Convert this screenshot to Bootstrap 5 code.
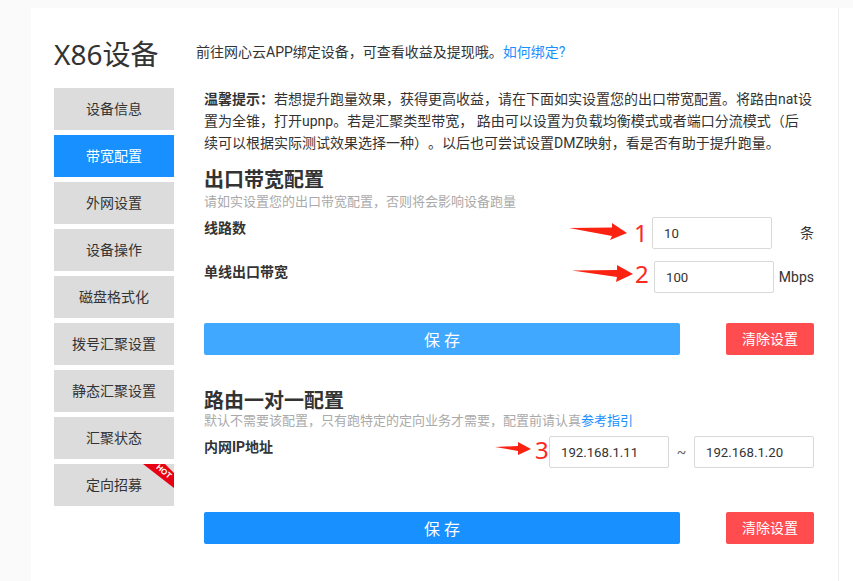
<!DOCTYPE html>
<html lang="zh-CN">
<head>
<meta charset="utf-8">
<title>X86设备</title>
<link href="https://cdn.jsdelivr.net/npm/bootstrap@5.3.0/dist/css/bootstrap.min.css" rel="stylesheet">
<style>
html,body{height:100%;}
body{background:#fafafa;font-family:Roboto,"Noto Sans CJK SC",sans-serif;font-size:14px;color:#333;overflow:hidden;text-spacing-trim:space-all;}
.shell{margin:8px 14px 0 31px;width:808px;height:573px;background:#fff;border-right:1px solid #eee;padding:28px 24px 0 23px;box-shadow:15px 0 0 #fff;}
.ttl{font-family:"Noto Sans","Noto Sans CJK SC",sans-serif;font-size:28px;line-height:36px;color:#333;width:142px;margin:0;font-weight:400;}
.lead-text{line-height:20px;padding-top:6px;color:#333;}
.lnk{color:#1890ff;text-decoration:none;}
.top-row{height:52px;}
.side{width:120px;gap:5px;}
.side-item{height:42px;background:#dcdcdc;color:#333;display:flex;align-items:center;justify-content:center;text-decoration:none;position:relative;overflow:hidden;line-height:1;}
.side-item.on{background:#1890ff;color:#fff;}
.ribbon{position:absolute;top:0;right:0;width:31px;height:24px;background:#e60012;clip-path:polygon(0 0,22px 0,31px 9px,31px 24px);}
.ribbon-t{position:absolute;top:3px;right:2px;font-size:8px;line-height:10px;font-weight:700;color:#fff;transform:rotate(40deg);font-family:"Liberation Sans",sans-serif;}
.body-col{width:610px;margin-left:30px;}
.tip{line-height:22px;margin:0;height:66px;white-space:nowrap;}
.sec-h{font-size:20px;font-weight:700;line-height:24px;margin:0;color:#333;}
.sec-s{font-size:13px;line-height:16px;color:#aaa;}
.sec-s.gap{margin-top:2px;}
.lbl{font-size:14px;font-weight:700;color:#333;line-height:20px;padding-top:1px;}
.inp{width:120px;height:32px;border:1px solid #d9d9d9;border-radius:2px;padding:0 11px;font-size:13.2px;line-height:30px;color:#333;background:#fff;flex-shrink:0;}
.inp:focus{outline:none;}
.rw{height:32px;}
.num{color:#fb2a1e;font-size:24px;line-height:32px;font-family:"Noto Sans",sans-serif;flex-shrink:0;}
.unit{line-height:32px;color:#333;text-align:right;flex-shrink:0;}
.act{height:32px;}
.save{width:476px;height:32px;padding:3px 0 0;border:0;border-radius:2px;background:#1890ff;color:#fff;font-size:16px;line-height:29px;}
.save.soft{background:#40a9ff;}
.clr{width:88px;height:32px;padding:0;border:0;border-radius:2px;background:#ff4d4f;color:#fff;font-size:14px;line-height:32px;}
.save:hover,.clr:hover{color:#fff;}
.s1{margin-top:14px;}
.r1{margin-top:7px;}
.r2{margin-top:12px;}
.a1{margin-top:30px;}
.s2{margin-top:34px;}
.r3{margin-top:7px;}
.a2{margin-top:44px;}
.u1{width:42px;}
.u2{width:40px;}
svg{flex-shrink:0;}
.ar1{width:58px;margin-right:7px;}
.ar2{width:61px;margin-right:2px;}
.ar3{width:36px;margin-right:4px;}
.n1{width:18px;}
.n2{width:19px;margin-top:-3px;}
.n3{width:14px;margin-top:-2px;}
.tilde{width:25px;text-align:center;color:#666;line-height:32px;}
</style>
</head>
<body>
<div class="shell">
  <div class="d-flex top-row">
    <h1 class="ttl">X86设备</h1>
    <div class="lead-text">前往网心云APP绑定设备&#xFF0C;可查看收益及提现哦。<a class="lnk" href="#">如何绑定?</a></div>
  </div>
  <div class="d-flex">
    <nav class="side d-flex flex-column flex-shrink-0">
      <a class="side-item" href="#">设备信息</a>
      <a class="side-item on" href="#">带宽配置</a>
      <a class="side-item" href="#">外网设置</a>
      <a class="side-item" href="#">设备操作</a>
      <a class="side-item" href="#">磁盘格式化</a>
      <a class="side-item" href="#">拨号汇聚设置</a>
      <a class="side-item" href="#">静态汇聚设置</a>
      <a class="side-item" href="#">汇聚状态</a>
      <a class="side-item" href="#">定向招募<span class="ribbon"></span><span class="ribbon-t">HOT</span></a>
    </nav>
    <main class="body-col">
      <p class="tip"><b>温馨提示&#xFF1A;</b>若想提升跑量效果&#xFF0C;获得更高收益&#xFF0C;请在下面如实设置您的出口带宽配置。将路由nat设<br>置为全锥&#xFF0C;打开upnp。若是汇聚类型带宽&#xFF0C; 路由可以设置为负载均衡模式或者端口分流模式&#xFF08;后<br>续可以根据实际测试效果选择一种&#xFF09;。以后也可尝试设置DMZ映射&#xFF0C;看是否有助于提升跑量。</p>

      <h2 class="sec-h s1">出口带宽配置</h2>
      <div class="sec-s gap">请如实设置您的出口带宽配置&#xFF0C;否则将会影响设备跑量</div>

      <div class="d-flex rw r1">
        <div class="lbl flex-grow-1">线路数</div>
        <svg class="ar1" height="32" viewBox="0 0 58 32"><path fill="#fb2212" d="M0 11 L43 10.5 L43 6 L58 16 L41 23 L43 19 Z"/></svg>
        <span class="num n1">1</span>
        <input class="inp" value="10" aria-label="线路数">
        <div class="unit u1">条</div>
      </div>
      <div class="d-flex rw r2">
        <div class="lbl flex-grow-1">单线出口带宽</div>
        <svg class="ar2" height="32" viewBox="0 0 61 32"><path fill="#fb2212" d="M0 9.5 L45 9 L45 4 L61 13 L44 21 L45 16 Z"/></svg>
        <span class="num n2">2</span>
        <input class="inp" value="100" aria-label="单线出口带宽">
        <div class="unit u2">Mbps</div>
      </div>
      <div class="d-flex justify-content-between act a1">
        <button class="btn save soft" type="button">保 存</button>
        <button class="btn clr" type="button">清除设置</button>
      </div>

      <h2 class="sec-h s2">路由一对一配置</h2>
      <div class="sec-s">默认不需要该配置&#xFF0C;只有跑特定的定向业务才需要&#xFF0C;配置前请认真<a class="lnk" href="#">参考指引</a></div>
      <div class="d-flex rw r3">
        <div class="lbl flex-grow-1">内网IP地址</div>
        <svg class="ar3" height="32" viewBox="0 0 36 32"><path fill="#fb2212" d="M0 11 L23 10 L23 6 L36 13 L23 19 L23 15 Z"/></svg>
        <span class="num n3">3</span>
        <input class="inp" value="192.168.1.11" aria-label="起始IP">
        <div class="tilde">~</div>
        <input class="inp" value="192.168.1.20" aria-label="结束IP">
      </div>
      <div class="d-flex justify-content-between act a2">
        <button class="btn save" type="button">保 存</button>
        <button class="btn clr" type="button">清除设置</button>
      </div>
    </main>
  </div>
</div>
</body>
</html>
